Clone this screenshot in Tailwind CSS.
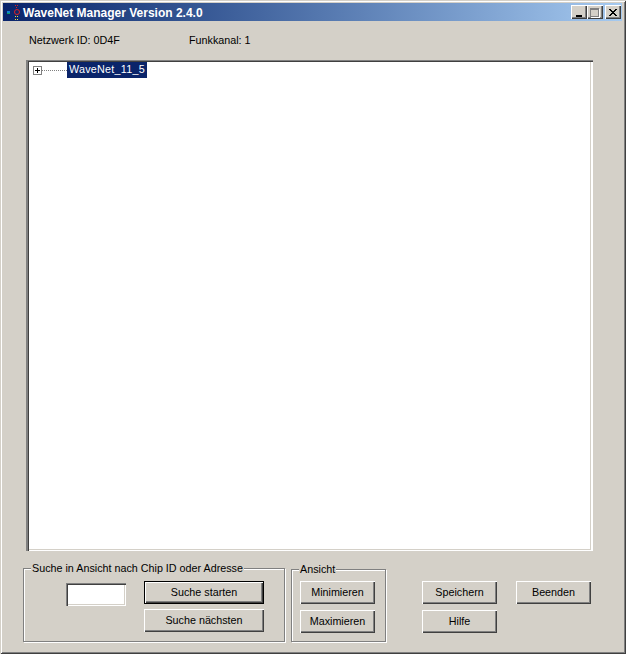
<!DOCTYPE html>
<html lang="de">
<head>
    <meta charset="UTF-8">
    <title>WaveNet Manager Version 2.4.0</title>
    <script src="https://cdn.jsdelivr.net/npm/@tailwindcss/browser@4"></script>
</head>
<body class="m-0 overflow-hidden bg-[#d4d0c8] font-['Liberation_Sans',sans-serif] text-[10.75px] text-black">
    <div class="w-[626px] h-[654px] flex flex-col pt-[3px] px-[3px] bg-[#d4d0c8] shadow-[inset_1px_1px_0_#d4d0c8,inset_-1px_-1px_0_#404040,inset_2px_2px_0_#fff,inset_-2px_-2px_0_#808080]">
        <!-- Title bar -->
        <div class="h-[18px] w-[619px] flex items-center bg-gradient-to-r from-[#0a246a] to-[#a6caf0]">
            <svg class="w-[16px] h-[16px] ml-[1px] shrink-0" viewBox="0 0 16 16">
                <rect x="3" y="7" width="3" height="2" fill="#1084d0"/>
                <rect x="3" y="9" width="3" height="1" fill="#10a060"/>
                <rect x="11" y="1" width="1" height="1" fill="#e02020"/>
                <rect x="13" y="1" width="1" height="1" fill="#e02020"/>
                <rect x="12" y="3" width="1" height="1" fill="#e02020"/>
                <circle cx="13" cy="8" r="2.5" fill="none" stroke="#e02020"/>
                <rect x="11" y="12" width="1" height="1" fill="#f0e040"/>
                <rect x="13" y="12" width="1" height="1" fill="#f0e040"/>
                <rect x="11" y="15" width="1" height="1" fill="#f0e040"/>
                <rect x="13" y="15" width="1" height="1" fill="#f0e040"/>
            </svg>
            <span class="ml-[3px] pt-[1px] font-bold text-white text-[12px] whitespace-nowrap">WaveNet Manager Version 2.4.0</span>
            <div class="ml-auto mr-[1px] flex">
                <div class="w-[16px] h-[14px] flex items-end justify-center pb-[2px] pr-[1px] bg-[#d4d0c8] shadow-[inset_1px_1px_0_#fff,inset_-1px_-1px_0_#404040,inset_-2px_-2px_0_#808080]">
                    <div class="w-[6px] h-[2px] bg-black"></div>
                </div>
                <div class="w-[16px] h-[14px] flex items-center justify-center pr-[1px] bg-[#d4d0c8] shadow-[inset_1px_1px_0_#fff,inset_-1px_-1px_0_#404040,inset_-2px_-2px_0_#808080]">
                    <div class="w-[9px] h-[9px] border border-t-2 border-[#808080] shadow-[1px_1px_0_#fff]"></div>
                </div>
                <div class="w-[16px] h-[14px] ml-[2px] flex items-center justify-center pr-[1px] bg-[#d4d0c8] shadow-[inset_1px_1px_0_#fff,inset_-1px_-1px_0_#404040,inset_-2px_-2px_0_#808080]">
                    <svg class="w-[8px] h-[7px]" viewBox="0 0 8 7" shape-rendering="crispEdges">
                        <path d="M0 0h2v1h1v1h2v-1h1v-1h2v1h-1v1h-1v1h-1v1h1v1h1v1h1v1h-2v-1h-1v-1h-2v1h-1v1h-2v-1h1v-1h1v-1h1v-1h-1v-1h-1v-1h-1z" fill="#000"/>
                    </svg>
                </div>
            </div>
        </div>

        <!-- Network info -->
        <div class="h-[39px] pb-[1px] flex items-center pl-[26px]">
            <span class="w-[160px]">Netzwerk ID: 0D4F</span>
            <span>Funkkanal: 1</span>
        </div>

        <!-- Tree -->
        <div class="ml-[23px] w-[567px] h-[491px] pt-[2px] pl-[7px] bg-white shadow-[inset_2px_1px_0_#808080,inset_3px_2px_0_#404040,inset_-2px_-1px_0_#fff,inset_-3px_-2px_0_#d4d0c8]">
            <div class="h-[16px] flex items-center">
                <div class="relative w-[9px] h-[9px] border border-[#808080] bg-white shrink-0">
                    <div class="absolute left-[1px] top-[3px] w-[5px] h-[1px] bg-black"></div>
                    <div class="absolute left-[3px] top-[1px] w-[1px] h-[5px] bg-black"></div>
                </div>
                <div class="w-[25px] border-t border-dotted border-[#808080]"></div>
                <div class="w-[80px] h-[16px] pl-[2px] leading-[15px] tracking-[0.25px] bg-[#0a246a] text-white whitespace-nowrap">WaveNet_11_5</div>
            </div>
        </div>

        <!-- Bottom controls -->
        <div class="flex pt-[17px] pl-[20px]">
            <fieldset class="w-[262px] h-[74px] border border-[#808080] shadow-[1px_1px_0_#fff,inset_1px_1px_0_#fff] relative">
                <legend class="absolute -top-[7px] left-[7px] px-[1px] leading-[13px] bg-[#d4d0c8] whitespace-nowrap">Suche in Ansicht nach Chip ID oder Adresse</legend>
                <div class="flex pt-[12px] pl-[42px]">
                    <input type="text" class="mt-[2px] w-[60px] h-[23px] bg-white shadow-[inset_1px_1px_0_#808080,inset_2px_2px_0_#404040,inset_-1px_-1px_0_#fff,inset_-2px_-2px_0_#d4d0c8]">
                    <div class="ml-[18px] flex flex-col gap-[5px]">
                        <button class="w-[120px] h-[23px] border border-black bg-[#d4d0c8] shadow-[inset_1px_1px_0_#fff,inset_-1px_-1px_0_#404040,inset_-2px_-2px_0_#808080]">Suche starten</button>
                        <button class="w-[120px] h-[23px] bg-[#d4d0c8] shadow-[inset_1px_1px_0_#fff,inset_-1px_-1px_0_#404040,inset_-2px_-2px_0_#808080]">Suche nächsten</button>
                    </div>
                </div>
            </fieldset>
            <fieldset class="ml-[6px] w-[95px] h-[73px] mt-[1px] border border-[#808080] shadow-[1px_1px_0_#fff,inset_1px_1px_0_#fff] relative">
                <legend class="absolute -top-[7px] left-[7px] px-[1px] leading-[13px] bg-[#d4d0c8] whitespace-nowrap">Ansicht</legend>
                <div class="flex flex-col gap-[6px] pt-[11px] pl-[8px]">
                    <button class="w-[75px] h-[23px] bg-[#d4d0c8] shadow-[inset_1px_1px_0_#fff,inset_-1px_-1px_0_#404040,inset_-2px_-2px_0_#808080]">Minimieren</button>
                    <button class="w-[75px] h-[23px] bg-[#d4d0c8] shadow-[inset_1px_1px_0_#fff,inset_-1px_-1px_0_#404040,inset_-2px_-2px_0_#808080]">Maximieren</button>
                </div>
            </fieldset>
            <div class="ml-[36px] pt-[13px] flex flex-col gap-[6px]">
                <button class="w-[75px] h-[23px] bg-[#d4d0c8] shadow-[inset_1px_1px_0_#fff,inset_-1px_-1px_0_#404040,inset_-2px_-2px_0_#808080]">Speichern</button>
                <button class="w-[75px] h-[23px] bg-[#d4d0c8] shadow-[inset_1px_1px_0_#fff,inset_-1px_-1px_0_#404040,inset_-2px_-2px_0_#808080]">Hilfe</button>
            </div>
            <div class="ml-[19px] pt-[13px]">
                <button class="w-[75px] h-[23px] bg-[#d4d0c8] shadow-[inset_1px_1px_0_#fff,inset_-1px_-1px_0_#404040,inset_-2px_-2px_0_#808080]">Beenden</button>
            </div>
        </div>
    </div>
</body>
</html>
